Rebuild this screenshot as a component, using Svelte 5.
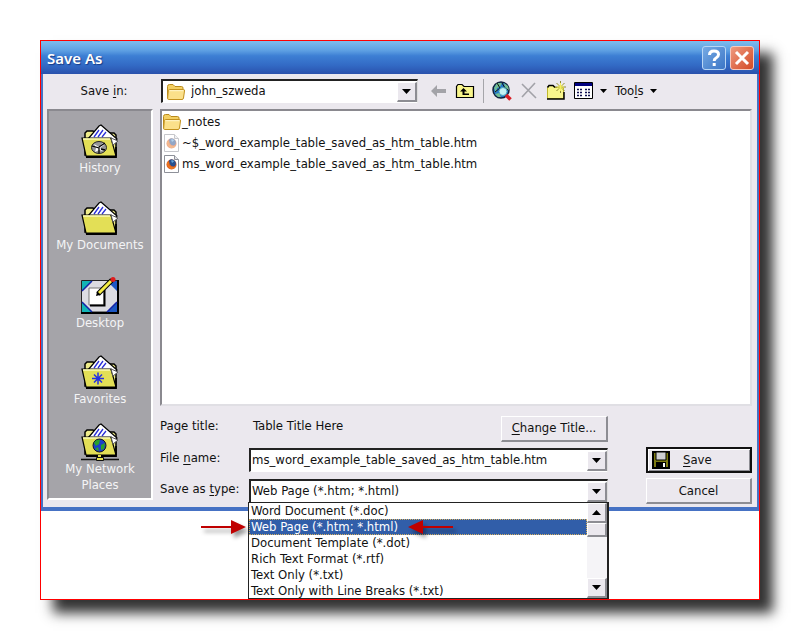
<script>
    const files = [
        { name: '_notes', kind: 'folder' },
        { name: '~$_word_example_table_saved_as_htm_table.htm', kind: 'temp' },
        { name: 'ms_word_example_table_saved_as_htm_table.htm', kind: 'page' }
    ];
    const places = [
        { name: 'History', kind: 'history' },
        { name: 'My Documents', kind: 'documents' },
        { name: 'Desktop', kind: 'desktop' },
        { name: 'Favorites', kind: 'favorites' },
        { name: 'My Network Places', kind: 'network' }
    ];
    const types = [
        'Word Document (*.doc)',
        'Web Page (*.htm; *.html)',
        'Document Template (*.dot)',
        'Rich Text Format (*.rtf)',
        'Text Only (*.txt)',
        'Text Only with Line Breaks (*.txt)'
    ];
    let fileName = $state('ms_word_example_table_saved_as_htm_table.htm');
    let type = $state(types[1]);
</script>

{#snippet folder()}
    <svg width="20" height="18" viewBox="0 0 20 18" aria-hidden="true">
        <path d="M1.5 15V3.5Q1.5 1.5 3.5 1.5H7L9 3.5H15.5Q17 3.5 17 5V15Z" fill="#f3cf62" stroke="#b98a1c" />
        <path d="M3.5 6.5H17.5Q18.8 6.5 18.5 8L17.5 15Q17.3 16.5 16 16.5H2.5Q1.5 16.5 1.7 15L2.3 7.7Q2.4 6.5 3.5 6.5Z" fill="#fbe08a" stroke="#c3921f" />
        <path d="M3.5 7.7H17.3" stroke="#fff6cc" />
    </svg>
{/snippet}

{#snippet down()}
    <svg width="9" height="5" viewBox="0 0 9 5" aria-hidden="true"><path d="M0 0H9L4.5 5Z" /></svg>
{/snippet}

{#snippet fox(faded)}
    <svg class:faded width="20" height="18" viewBox="0 0 20 18" aria-hidden="true">
        <path d="M2.5 .5H12.5L16.5 4.5V17.5H2.5Z" fill="#fff" stroke="#8e9199" />
        <path d="M12.5 .5V4.5H16.5" fill="#e4e4e8" stroke="#8e9199" />
        <circle cx="9.5" cy="9.5" r="5" fill="#e0581d" />
        <path d="M7 5.5Q10 3 13 6Q15 9 12.5 11.5Q9 12 8 9.5Q7 8 7 5.5Z" fill="#27508f" />
        <path d="M9 5.5Q11 4.5 12 6.5L10 8Z" fill="#69a7da" />
        <path d="M5 7Q4.5 12 8.5 14Q13 14.5 14.2 10.5Q11 13.5 8 11Q6 9.5 7.5 7.5Z" fill="#e8761f" />
    </svg>
{/snippet}

{#snippet place(kind)}
    {#if kind === 'desktop'}
        <svg width="38" height="38" viewBox="0 0 38 38" aria-hidden="true">
            <path d="M.5 3.5H37V35H.5Z" fill="#dcdce2" stroke="#222" />
            <path d="M37 3V36H0" fill="none" stroke="#000" stroke-width="2" />
            <path d="M1 4H11L1 14ZM1 25L11 35H1Z" fill="#12b5b5" />
            <path d="M36 4H26L36 14ZM36 25L26 35H36Z" fill="#1c57c4" />
            <path d="M1 14L11 4M1 25L11 35M36 25L26 35" stroke="#1724a8" stroke-width="1.5" />
            <path d="M8 11H23V28H8Z" fill="#fff" stroke="#777" />
            <path d="M23.5 13V28.5H9" fill="none" stroke="#000" stroke-width="2" />
            <path d="M17 17L31 3" stroke="#000" stroke-width="5" />
            <path d="M18 16L30 4" stroke="#f4ed45" stroke-width="3" />
            <path d="M15 19L16 15L19 18Z" />
            <circle cx="32" cy="2.5" r="2.5" fill="#df1c1c" />
        </svg>
    {:else}
        <svg width="38" height={kind === 'network' ? 38 : 36} viewBox="0 0 38 {kind === 'network' ? 38 : 36}" aria-hidden="true">
            <path d="M4 31V9L6 7H12L14 9H33L35 11V31Z" fill="#efec8a" stroke="#000" stroke-width="1.5" />
            <path d="M7 15L18 2L20 1L36 15L31 20Z" fill="#fff" stroke="#000" stroke-width="1.2" />
            <path d="M13 13L18 6M17 13L22 6M21 13L25 8" stroke="#2b2fd8" stroke-width="1.3" />
            <path d="M1 14H30L35 32H5Z" fill="#e3df56" stroke="#000" stroke-width="1.2" />
            <path d="M2 15H29" stroke="#fcfbb7" stroke-width="1.5" />
            <path d="M30 14L37 17L32 21Z" fill="#fff" stroke="#555" />
            <path d="M5 33H35V23" fill="none" stroke="#000" stroke-width="1.8" />
            {#if kind === 'history'}
                <ellipse cx="18" cy="23.5" rx="7.5" ry="6" fill="#97979a" stroke="#222" />
                <path d="M13 20L18 23L22 19L23 21L19 24L22 27L18 26L14 28L15 24Z" fill="#fff" />
                <path d="M18 23L24 19M11 22L18 24V29M20 25L24 26" fill="none" stroke="#000" stroke-width="1.3" />
            {:else if kind === 'favorites'}
                <path d="M17 17.500V29.500M11 23.500H23M13 19.500L21 27.500M21 19.500L13 27.500" stroke="#2430e2" stroke-width="1.5" />
            {:else if kind === 'network'}
                <circle cx="18.5" cy="22.5" r="6.5" fill="#1c3fc8" stroke="#112" />
                <path d="M13 20Q15 16 19 17L18 21L15 23ZM20 22L24 20L23 26L20 27ZM14 26L17 24L18 28Z" fill="#29a02c" />
                <path d="M0 36.5H38" stroke="#111" stroke-width="1.5" />
                <path d="M18.5 32V35" stroke="#e7e34f" stroke-width="3" />
                <path d="M15.5 34.5H22.5V37.5H15.5Z" fill="#e7e34f" stroke="#111" />
            {/if}
        </svg>
    {/if}
{/snippet}

<main class="frame">
    <section class="dialog" aria-label="Save As">
        <header class="titlebar">
            <h1>Save As</h1>
            <button class="cap help" aria-label="Help">
                <svg width="22" height="22" viewBox="0 0 22 22"><path d="M6.5 8Q6.5 4 11 4Q15.5 4 15.5 7.5Q15.5 9.5 13 11Q11.2 12 11.2 14" /><path d="M11.2 16V19" /></svg>
            </button>
            <button class="cap close" aria-label="Close">
                <svg width="22" height="22" viewBox="0 0 22 22"><path d="M5 5L17 17M17 5L5 17" /></svg>
            </button>
        </header>

        <div class="toolbar">
            <label for="savein">Save <u>i</u>n:</label>
            <div class="combo savein">
                {@render folder()}
                <select id="savein"><option>john_szweda</option></select>
                <span class="drop">{@render down()}</span>
            </div>
            <div class="tools">
                <button aria-label="Back">
                    <svg width="16" height="14" viewBox="0 0 16 14"><path d="M0 7L6 1V5H15V9H6V13Z" fill="#a3a3a8" /></svg>
                </button>
                <button aria-label="Up one level">
                    <svg width="20" height="18" viewBox="0 0 20 18"><path d="M1.5 15.5V4.5L3 2.5H7L9 4.5H18.5V15.5Z" fill="#f8f58c" stroke="#000" stroke-width="1.2" /><path d="M8.5 6L5 9.5H7.5V13H14V11.5H9.5V9.5H12Z" /></svg>
                </button>
                <span class="sep"></span>
                <button aria-label="Search the Web">
                    <svg width="20" height="20" viewBox="0 0 20 20"><circle cx="9" cy="9" r="8" fill="#2377c9" stroke="#10203c" stroke-width="1.5" /><path d="M2 7L5 2L10 2L8 6L5 7L4 12ZM12 2L16 5L17 9L13 7ZM3 13L7 12L9 16H6Z" fill="#71bd91" /><path d="M5 2L8 7L3 11M10 2L13 7L16 9" fill="none" stroke="#111" /><circle cx="11" cy="10.5" r="4" fill="#c4f2f5" stroke="#4aa3bd" /><path d="M14 14L18.5 18.5" stroke="#d81c24" stroke-width="3.5" /></svg>
                </button>
                <button aria-label="Delete">
                    <svg width="18" height="18" viewBox="0 0 18 18"><path d="M2 2L16 16M15 1L2 15" stroke="#a2a2a8" stroke-width="1.6" /></svg>
                </button>
                <button aria-label="Create new folder">
                    <svg width="20" height="20" viewBox="0 0 20 20"><path d="M1.5 17.5V6.5L3 4.5H7L9 6.5H17.5V17.5Z" fill="#f8f58c" stroke="#c0b92d" /><path d="M1.500 6.5L3 4.5H7L9 6.5M18 11V18H1" fill="none" stroke="#000" stroke-width="1.5" /><path d="M14.5 0V12M9 6H20M10.5 2L18.5 10M18.5 2L10.5 10" stroke="#8d8a36" /><path d="M14.5 2V10M11 6H18M12 3.5L17 8.5M17 3.5L12 8.5" stroke="#f6f05c" /></svg>
                </button>
                <button class="views" aria-label="Views">
                    <svg width="20" height="18" viewBox="0 0 20 18"><path d="M.5 .5H18.5V16.5H.5Z" fill="#fff" stroke="#000" /><path d="M1 1H18V4H1Z" fill="#000080" /><path d="M3 7.5H5M6 7.5H8M11 7.5H13M14 7.5H16M3 10.5H5M6 10.5H8M11 10.5H13M14 10.5H16M3 13.5H5M6 13.5H8M11 13.5H13M14 13.5H16" stroke="#111152" stroke-width="1.6" /></svg>
                    <svg width="7" height="4" viewBox="0 0 7 4"><path d="M0 0H7L3.5 4Z" /></svg>
                </button>
                <button class="menu">
                    <span>Too<u>l</u>s</span>
                    <svg width="7" height="4" viewBox="0 0 7 4"><path d="M0 0H7L3.5 4Z" /></svg>
                </button>
            </div>
        </div>

        <div class="body">
            <nav class="places">
                {#each places as p}
                    <button>
                        {@render place(p.kind)}
                        <span>{p.name}</span>
                    </button>
                {/each}
            </nav>

            <div class="content">
                <ul class="files">
                    {#each files as f}
                        <li>
                            {#if f.kind === 'folder'}
                                {@render folder()}
                            {:else}
                                {@render fox(f.kind === 'temp')}
                            {/if}
                            <span>{f.name}</span>
                        </li>
                    {/each}
                </ul>

                <form class="fields" onsubmit={(e) => e.preventDefault()}>
                    <span class="label">Page title:</span>
                    <div class="title">
                        <span class="label">Table Title Here</span>
                        <button type="button" class="btn change"><u>C</u>hange Title...</button>
                    </div>
                    <span></span>

                    <label class="label" for="filename">File <u>n</u>ame:</label>
                    <div class="combo">
                        <input id="filename" type="text" bind:value={fileName} />
                        <button type="button" class="drop" aria-label="Recent names">{@render down()}</button>
                    </div>
                    <button type="submit" class="btn save">
                        <svg width="18" height="18" viewBox="0 0 18 18" aria-hidden="true"><path d="M1 1H17V17H1Z" fill="#7d7b12" stroke="#000" stroke-width="2" /><path d="M4 1H14V9H4Z" fill="#cfcfd3" stroke="#000" /><path d="M4 11H14V17H4Z" /><path d="M11 12H13V16H11Z" fill="#fff" /></svg>
                        <span><u>S</u>ave</span>
                    </button>

                    <label class="label" for="type">Save as <u>t</u>ype:</label>
                    <div class="combo">
                        <select id="type" bind:value={type}>
                            {#each types as t}<option>{t}</option>{/each}
                        </select>
                        <span class="drop">{@render down()}</span>

                        <div class="popup">
                            <ul role="listbox" aria-label="Save as type">
                                {#each types as t}
                                    <li role="option" aria-selected={t === type}>{t}</li>
                                {/each}
                            </ul>
                            <div class="scroll">
                                <button type="button" class="up" aria-label="Scroll up">{@render down()}</button>
                                <span class="thumb"></span>
                                <button type="button" aria-label="Scroll down">{@render down()}</button>
                            </div>
                        </div>
                        <svg class="pointer before" width="46" height="16" viewBox="0 0 46 16" aria-hidden="true"><path d="M0 7H30V1L45 8L30 15V9H0Z" /></svg>
                        <svg class="pointer after" width="46" height="16" viewBox="0 0 46 16" aria-hidden="true"><path d="M46 7H16V1L1 8L16 15V9H46Z" /></svg>
                    </div>
                    <button type="button" class="btn">Cancel</button>
                </form>
            </div>
        </div>
    </section>
</main>

<style>
    :global(body) {
        background: #fff;
        font: 13px/16px "DejaVu Sans Condensed", "DejaVu Sans", sans-serif;
        color: #111;
    }
    * {
        box-sizing: border-box;
    }
    button, input, select {
        font: inherit;
        color: inherit;
        border: 0;
        padding: 0;
        margin: 0;
        background: none;
    }
    svg {
        display: block;
        flex: none;
    }
    u {
        text-underline-offset: 2px;
    }
    .frame {
        margin: 40px;
        border: 1px solid #f00;
        padding-bottom: 88px;
        background: #fff;
        box-shadow: 13px 13px 12px #333;
    }
    .dialog {
        background: #ebe8ee;
        border: solid #4672c4;
        border-width: 0 2px 4px;
    }
    .titlebar {
        display: flex;
        align-items: center;
        gap: 4px;
        height: 33px;
        padding: 0 5px;
        margin: 0 -2px;
        background: linear-gradient(#7fbcec, #5c9ee2 30%, #3d7fd4 45%, #3269c4 75%, #2a51ac);
    }
    h1 {
        flex: 1;
        margin: 0;
        padding-left: 1px;
        font: 600 15px/20px "Noto Sans", sans-serif;
        color: #fff;
        text-shadow: 1px 1px 1px #173b87;
    }
    .cap {
        width: 24px;
        height: 24px;
        border: 1px solid #b9d6f5;
        border-radius: 3px;
        background: linear-gradient(135deg, #76aae4, #3c76c6);
    }
    .cap path {
        fill: none;
        stroke: #fff;
        stroke-width: 3;
    }
    .close {
        border-color: #f6cabf;
        background: linear-gradient(135deg, #ef9a80, #d34a26);
    }
    .toolbar {
        display: flex;
        align-items: center;
        padding: 5px 5px 6px 4px;
    }
    .toolbar > label {
        width: 114px;
        text-align: center;
    }
    .combo {
        position: relative;
        display: flex;
        align-items: center;
        height: 24px;
        background: #fff;
        border: 2px solid #222;
        border-right: 1px solid #ddd;
        border-bottom: 1px solid #fff;
    }
    .combo input, .combo select {
        flex: 1;
        min-width: 0;
        height: 20px;
        padding: 0 1px 2px;
        appearance: none;
        outline: 0;
    }
    .savein {
        flex: 0 1 257px;
        padding-left: 3px;
    }
    .savein select {
        padding-left: 5px;
    }
    .drop, .scroll button, .thumb {
        display: flex;
        align-items: center;
        justify-content: center;
        width: 20px;
        height: 20px;
        background: #ebe8ee;
        border: solid;
        border-width: 1px 2px 2px 1px;
        border-color: #fff #8d8d93 #8d8d93 #fff;
    }
    span.drop {
        pointer-events: none;
    }
    .tools {
        display: flex;
        align-items: center;
        gap: 8px;
        padding-left: 13px;
    }
    .sep {
        width: 1px;
        height: 24px;
        background: #a5a5aa;
    }
    .views, .menu {
        display: flex;
        align-items: center;
        gap: 6px;
    }
    .body {
        display: flex;
        gap: 7px;
        padding: 0 5px 3px 4px;
    }
    .places {
        display: grid;
        grid-auto-rows: 77px;
        flex: none;
        width: 106px;
        margin-bottom: 4px;
        background: #a5a4a9;
        border: 2px solid #8a898f;
        border-right-color: #fff;
        border-bottom-color: #fff;
    }
    .places button {
        display: flex;
        flex-direction: column;
        align-items: center;
        justify-content: center;
        color: #f4f4f6;
    }
    .places span {
        max-width: 90px;
    }
    .content {
        flex: 1;
        min-width: 0;
    }
    .files {
        height: 297px;
        margin: 0;
        padding: 0;
        list-style: none;
        background: #fff;
        border: 2px solid #8a898f;
        border-right-color: #e0dfe4;
        border-bottom-color: #e0dfe4;
    }
    .files li {
        display: flex;
        align-items: center;
        height: 21px;
    }
    .faded {
        opacity: .5;
    }
    .fields {
        display: grid;
        grid-template-columns: 89px 1fr 106px;
        grid-template-rows: 27px 26px 26px;
        row-gap: 5px;
        align-items: center;
        margin-top: 9px;
    }
    .fields > :nth-child(3n + 2) {
        margin-right: 38px;
    }
    .label {
        padding-bottom: 5px;
    }
    .title {
        display: flex;
        align-items: center;
        justify-content: space-between;
        padding-left: 4px;
    }
    .btn {
        height: 26px;
        background: #ebe8ee;
        border: solid;
        border-width: 1px 2px 2px 1px;
        border-color: #fff #8d8d93 #8d8d93 #fff;
    }
    .change {
        width: 107px;
    }
    .save {
        display: flex;
        align-items: center;
        gap: 13px;
        padding-left: 4px;
        border: 2px solid #111;
        box-shadow: inset 1px 1px #fff, inset -1px -1px #8d8d93;
    }
    .popup {
        position: absolute;
        z-index: 1;
        top: 21px;
        left: -3px;
        right: -2px;
        display: flex;
        height: 97px;
        overflow: hidden;
        background: #fff;
        border: 1px solid #222;
        border-right-width: 2px;
    }
    .popup ul {
        flex: 1;
        margin: 0;
        padding: 0;
        list-style: none;
    }
    .popup li {
        height: 16px;
        padding-left: 2px;
        white-space: nowrap;
    }
    .popup li[aria-selected="true"] {
        color: #fff;
        background: #315ea9;
        outline: 1px dotted #d6b060;
        outline-offset: -1px;
    }
    .scroll {
        display: flex;
        flex-direction: column;
        width: 20px;
        background: #f5f4f7;
    }
    .thumb {
        height: 14px;
        margin-bottom: auto;
    }
    .up svg {
        transform: rotate(180deg);
    }
    .pointer {
        position: absolute;
        z-index: 2;
        top: 38px;
        fill: #c00000;
        filter: drop-shadow(3px 4px 2px #0006);
    }
    .before {
        left: -50px;
    }
    .after {
        left: 156px;
    }
</style>
